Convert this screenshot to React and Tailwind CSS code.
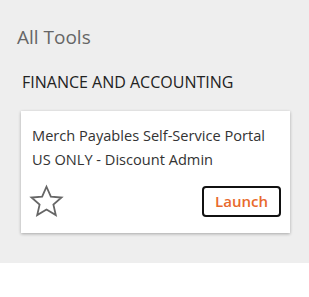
export default function App() {
  return (
    <div className="w-[309px] h-[297px] bg-white" style={{ fontFamily: '"Open Sans", sans-serif' }}>
      <div className="h-[263px] bg-[#eeeeee] pt-[24px] pl-[17px] pr-[19px]">
        <h1 className="text-[19px] leading-[26px] text-[#666666]">All Tools</h1>
        <h2 className="mt-[21px] ml-[5px] text-[16px] leading-[22px] text-[#222222]">FINANCE AND ACCOUNTING</h2>
        <div className="mt-[18px] ml-[4px] h-[122px] bg-white shadow-[0_1px_3px_rgba(0,0,0,0.3)] pt-[12px] px-[11px] flex flex-col">
          <p className="text-[14.6px] leading-[24px] text-[#333333]">
            <span className="block">Merch Payables Self-Service Portal</span>
            <span className="block">US ONLY - Discount Admin</span>
          </p>
          <div className="mt-auto mb-[14px] flex items-center justify-between">
            <svg width="37" height="36" viewBox="0 0 24 24" className="-ml-[4px]">
              <path
                d="M12 2.5l2.9 6.6 7.1.6-5.4 4.7 1.6 7-6.2-3.7-6.2 3.7 1.6-7L2 9.7l7.1-.6z"
                fill="none"
                stroke="#666666"
                strokeWidth="1.2"
                strokeLinejoin="miter"
              />
            </svg>
            <button className="w-[79px] h-[31px] border-2 border-[#111111] rounded-[4px] text-[15px] font-semibold text-[#e8692c] mr-[-2px]">
              Launch
            </button>
          </div>
        </div>
      </div>
    </div>
  );
}
